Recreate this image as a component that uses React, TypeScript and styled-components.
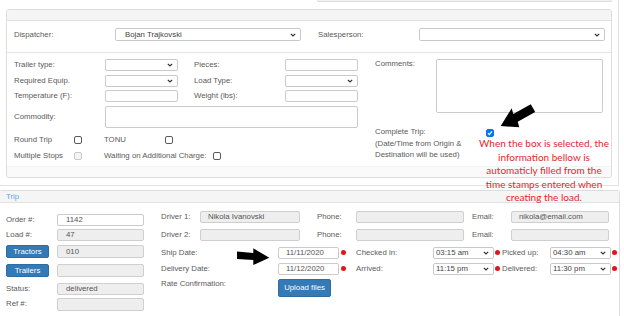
import styled, { createGlobalStyle } from 'styled-components';

const GlobalStyle = createGlobalStyle`
  html, body { margin: 0; padding: 0; background: #fff; }
  body {
    font-family: "Liberation Sans", Arial, sans-serif;
    font-size: 7.8px;
    color: #555;
  }
  #root { width: 624px; height: 316px; overflow: hidden; }
`;

const Page = styled.div`
  position: relative;
  width: 624px;
  height: 316px;
  overflow: hidden;
`;

const Outer = styled.div`
  box-sizing: border-box;
  width: 619px;
  padding: 0 6px 7px 6px;
  border-right: 1px solid #e2e2e2;
  border-bottom: 1px solid #e2e2e2;
`;

// bottom edge of the field that sits above the visible area
const Remnant = styled.div`
  margin: 0 0 7px 311px;
  width: 293px;
  height: 1px;
  background: #f1f1f1;
  border: 1px solid #dcdcdc;
  border-top: none;
  border-radius: 0 0 2px 2px;
`;

const Panel = styled.div`
  border: 1px solid #dddddd;
  border-radius: 3px;
  background: #fff;
  overflow: hidden;
`;

const PanelHead = styled.div`
  height: 10px;
  background: #f5f5f5;
  border-bottom: 1px solid #e1e1e1;
`;

const PanelFoot = styled.div`
  height: 10px;
  background: #fafafa;
  border-top: 1px solid #f2f2f2;
`;

const DispatchRow = styled.div`
  display: flex;
  align-items: center;
  padding: 7px 0 11px 7px;
  border-bottom: 1px solid #e6e6e6;
`;

const Label = styled.div<{ $w: number; $ml?: number; $pl?: number }>`
  flex: none;
  box-sizing: border-box;
  width: ${(p) => p.$w}px;
  margin-left: ${(p) => p.$ml ?? 0}px;
  padding-left: ${(p) => p.$pl ?? 0}px;
  line-height: 10px;
  white-space: nowrap;
  color: #5a5a5a;
`;

const Field = styled.div<{ $w: number; $h?: number; $grey?: boolean; $pl?: number }>`
  flex: none;
  box-sizing: border-box;
  width: ${(p) => p.$w}px;
  height: ${(p) => p.$h ?? 12}px;
  padding-left: ${(p) => p.$pl ?? 7}px;
  border: 1px solid ${(p) => (p.$grey ? '#cfcfcf' : '#cbcbcb')};
  border-radius: 2px;
  background: ${(p) => (p.$grey ? '#eeeeee' : '#fff')};
  display: flex;
  align-items: center;
  color: #555;
  white-space: nowrap;
`;

const SelectBox = styled.div<{ $w: number; $h?: number; $pl?: number }>`
  flex: none;
  box-sizing: border-box;
  width: ${(p) => p.$w}px;
  height: ${(p) => p.$h ?? 12}px;
  padding: 0 4px 0 ${(p) => p.$pl ?? 3}px;
  border: 1px solid #c9c9c9;
  border-radius: 2px;
  background: #fff;
  display: flex;
  align-items: center;
  justify-content: space-between;
  color: #444;
  white-space: nowrap;
`;

const Chevron = () => (
  <svg width="6" height="4" viewBox="0 0 6 4">
    <polyline points="0.8,0.8 3,3 5.2,0.8" fill="none" stroke="#333" strokeWidth="1.2" />
  </svg>
);

const Select = ({ w, h, pl, value }: { w: number; h?: number; pl?: number; value?: string }) => (
  <SelectBox $w={w} $h={h} $pl={pl}>
    <span>{value}</span>
    <Chevron />
  </SelectBox>
);

const Fields = styled.div`
  display: flex;
  padding: 6px 0 2px 7px;
`;

const LeftGrid = styled.div`
  display: grid;
  grid-template-columns: 91px 73px 107px 73px;
  row-gap: 3.5px;
  align-items: center;
`;

const TextArea = styled.div<{ $w: number; $h: number }>`
  box-sizing: border-box;
  width: ${(p) => p.$w}px;
  height: ${(p) => p.$h}px;
  border: 1px solid #cbcbcb;
  border-radius: 2px;
  background: #fff;
`;

const Commodity = styled(TextArea)`
  grid-column: 2 / 5;
`;

const CheckRows = styled.div`
  margin-top: 4px;
`;

const CheckRow = styled.div`
  display: flex;
  align-items: center;
  height: 16px;
`;

const Box = styled.span<{ $ml?: number; $disabled?: boolean; $checked?: boolean }>`
  flex: none;
  box-sizing: border-box;
  width: 8px;
  height: 8px;
  margin-left: ${(p) => p.$ml ?? 0}px;
  border: 1px solid ${(p) => (p.$checked ? '#0b75e8' : p.$disabled ? '#c8c8c8' : '#5a5a5a')};
  border-radius: 2px;
  background: ${(p) => (p.$checked ? '#0b75e8' : p.$disabled ? '#f4f4f4' : '#fff')};
  display: flex;
  align-items: center;
  justify-content: center;
`;

const Check = ({ ml, disabled, checked }: { ml?: number; disabled?: boolean; checked?: boolean }) => (
  <Box $ml={ml} $disabled={disabled} $checked={checked}>
    {checked && (
      <svg width="6" height="6" viewBox="0 0 6 6">
        <polyline points="1,3.2 2.4,4.6 5,1.4" fill="none" stroke="#fff" strokeWidth="1.2" />
      </svg>
    )}
  </Box>
);

const RightBlock = styled.div`
  margin-left: 17px;
`;

const CommentsRow = styled.div`
  display: flex;
  align-items: flex-start;
`;

const CompleteRow = styled.div`
  display: flex;
  align-items: flex-start;
  margin-top: 13px;
`;

const CompleteText = styled.div`
  width: 111px;
  line-height: 11.5px;
  color: #5a5a5a;
`;

const CompleteBox = styled.div`
  margin-top: 3px;
`;

const TripPanel = styled.div`
  box-sizing: border-box;
  width: 621px;
  margin: 4px 0 0 -1px;
  border: 1px solid #dddddd;
  border-bottom: none;
  border-radius: 3px 3px 0 0;
  height: 140px;
`;

const TripHead = styled.div`
  height: 11px;
  line-height: 11px;
  padding-left: 6px;
  background: #f5f5f5;
  border-bottom: 1px solid #e1e1e1;
  color: #5aa7e8;
  font-size: 7.8px;
`;

const TripBody = styled.div`
  display: flex;
  padding-left: 6px;
`;

const TripLeft = styled.div`
  width: 138px;
  padding-top: 11px;
  display: flex;
  flex-direction: column;
  gap: 3px;
`;

const TripRight = styled.div`
  margin-left: 17px;
  padding-top: 8px;
  display: flex;
  flex-direction: column;
`;

const Row = styled.div<{ $mt?: number; $top?: boolean }>`
  display: flex;
  align-items: ${(p) => (p.$top ? 'flex-start' : 'center')};
  margin-top: ${(p) => p.$mt ?? 0}px;
`;

const BlueButton = styled.div<{ $w: number; $h: number; $mr?: number }>`
  flex: none;
  box-sizing: border-box;
  width: ${(p) => p.$w}px;
  height: ${(p) => p.$h}px;
  margin-right: ${(p) => p.$mr ?? 0}px;
  background: #337ab7;
  border: 1px solid #2e6da4;
  border-radius: 2px;
  color: #fff;
  display: flex;
  align-items: center;
  justify-content: center;
  white-space: nowrap;
`;

const Dot = styled.span<{ $ml?: number }>`
  flex: none;
  width: 5px;
  height: 5px;
  margin-left: ${(p) => p.$ml ?? 0}px;
  border-radius: 50%;
  background: #e3131b;
`;

const Annotation = styled.svg<{ $x: number; $y: number }>`
  position: absolute;
  left: ${(p) => p.$x}px;
  top: ${(p) => p.$y}px;
`;

const Note = styled.div`
  position: absolute;
  left: 464px;
  top: 137px;
  width: 160px;
  text-align: center;
  font-family: Lato, "Liberation Sans", sans-serif;
  font-size: 10px;
  line-height: 13.6px;
  color: #e8242f;
`;

export default function App() {
  return (
    <Page>
      <GlobalStyle />
      <Outer>
        <Remnant />
        <Panel>
          <PanelHead />
          <DispatchRow>
            <Label $w={101}>Dispatcher:</Label>
            <Select w={186} h={13} pl={9} value="Bojan Trajkovski" />
            <Label $w={101} $ml={17}>Salesperson:</Label>
            <Select w={186} h={13} />
          </DispatchRow>
          <Fields>
            <div>
              <LeftGrid>
                <Label $w={91}>Trailer type:</Label>
                <Select w={73} />
                <Label $w={107} $pl={16}>Pieces:</Label>
                <Field $w={73} />
                <Label $w={91}>Required Equip.</Label>
                <Select w={73} />
                <Label $w={107} $pl={16}>Load Type:</Label>
                <Select w={73} />
                <Label $w={91}>Temperature (F):</Label>
                <Field $w={73} />
                <Label $w={107} $pl={16}>Weight (lbs):</Label>
                <Field $w={73} />
                <Label $w={91}>Commodity:</Label>
                <Commodity $w={253} $h={22} />
              </LeftGrid>
              <CheckRows>
                <CheckRow>
                  <Label $w={60}>Round Trip</Label>
                  <Check />
                  <Label $w={61} $ml={22}>TONU</Label>
                  <Check />
                </CheckRow>
                <CheckRow>
                  <Label $w={60}>Multiple Stops</Label>
                  <Check disabled />
                  <Label $w={109} $ml={22}>Waiting on Additional Charge:</Label>
                  <Check />
                </CheckRow>
              </CheckRows>
            </div>
            <RightBlock>
              <CommentsRow>
                <Label $w={61}>Comments:</Label>
                <TextArea $w={167} $h={54} />
              </CommentsRow>
              <CompleteRow>
                <CompleteText>
                  Complete Trip:
                  <br />
                  (Date/Time from Origin &amp;
                  <br />
                  Destination will be used)
                </CompleteText>
                <CompleteBox>
                  <Check checked />
                </CompleteBox>
              </CompleteRow>
            </RightBlock>
          </Fields>
          <PanelFoot />
        </Panel>
      </Outer>

      <TripPanel>
        <TripHead>Trip</TripHead>
        <TripBody>
          <TripLeft>
            <Row>
              <Label $w={51}>Order #:</Label>
              <Field $w={87} $pl={8}>1142</Field>
            </Row>
            <Row>
              <Label $w={51}>Load #:</Label>
              <Field $w={87} $pl={8} $grey>47</Field>
            </Row>
            <Row $mt={1}>
              <BlueButton $w={43} $h={13} $mr={8}>Tractors</BlueButton>
              <Field $w={87} $h={13} $pl={8} $grey>010</Field>
            </Row>
            <Row $mt={3}>
              <BlueButton $w={43} $h={13} $mr={8}>Trailers</BlueButton>
              <Field $w={87} $h={13} $grey />
            </Row>
            <Row $mt={3}>
              <Label $w={51}>Status:</Label>
              <Field $w={87} $pl={8} $grey>delivered</Field>
            </Row>
            <Row>
              <Label $w={51}>Ref #:</Label>
              <Field $w={87} $h={13} $grey />
            </Row>
          </TripLeft>
          <TripRight>
            <Row>
              <Label $w={39}>Driver 1:</Label>
              <Field $w={100} $grey>Nikola Ivanovski</Field>
              <Label $w={39} $ml={17}>Phone:</Label>
              <Field $w={108} $grey />
              <Label $w={39} $ml={8}>Email:</Label>
              <Field $w={98} $grey>nikola@email.com</Field>
            </Row>
            <Row $mt={6}>
              <Label $w={39}>Driver 2:</Label>
              <Field $w={100} $grey />
              <Label $w={39} $ml={17}>Phone:</Label>
              <Field $w={108} $grey />
              <Label $w={39} $ml={8}>Email:</Label>
              <Field $w={98} $grey />
            </Row>
            <Row $mt={6}>
              <Label $w={117}>Ship Date:</Label>
              <Field $w={61}>11/11/2020</Field>
              <Dot $ml={2} />
              <Label $w={77} $ml={10}>Checked in:</Label>
              <Select w={61} pl={2} value="03:15 am" />
              <Dot $ml={1} />
              <Label $w={48} $ml={2}>Picked up:</Label>
              <Select w={61} pl={2} value="04:30 am" />
              <Dot $ml={1} />
            </Row>
            <Row $mt={4}>
              <Label $w={117}>Delivery Date:</Label>
              <Field $w={61}>11/12/2020</Field>
              <Dot $ml={2} />
              <Label $w={77} $ml={10}>Arrived:</Label>
              <Select w={61} pl={2} value="11:15 pm" />
              <Dot $ml={1} />
              <Label $w={48} $ml={2}>Delivered:</Label>
              <Select w={61} pl={2} value="11:30 pm" />
              <Dot $ml={1} />
            </Row>
            <Row $mt={4} $top>
              <Label $w={117}>Rate Confirmation:</Label>
              <BlueButton $w={53} $h={18}>Upload files</BlueButton>
            </Row>
          </TripRight>
        </TripBody>
      </TripPanel>

      <Annotation $x={495} $y={100} width="44" height="32" viewBox="0 0 44 32">
        <polygon
          points="5.7,26 16.7,8.3 18.3,13.9 35.8,4.2 40.2,12 22.7,21.7 24.3,27.3"
          fill="#000"
        />
      </Annotation>
      <Annotation $x={235} $y={245} width="37" height="22" viewBox="0 0 37 22">
        <polygon points="2,6.5 18.3,8 18.3,3.3 34.3,12.7 18.3,20 18.3,15 2,14" fill="#000" />
      </Annotation>
      <Note>
        When the box is selected, the
        <br />
        information bellow is
        <br />
        automaticly filled from the
        <br />
        time stamps entered when
        <br />
        creating the load.
      </Note>
    </Page>
  );
}
